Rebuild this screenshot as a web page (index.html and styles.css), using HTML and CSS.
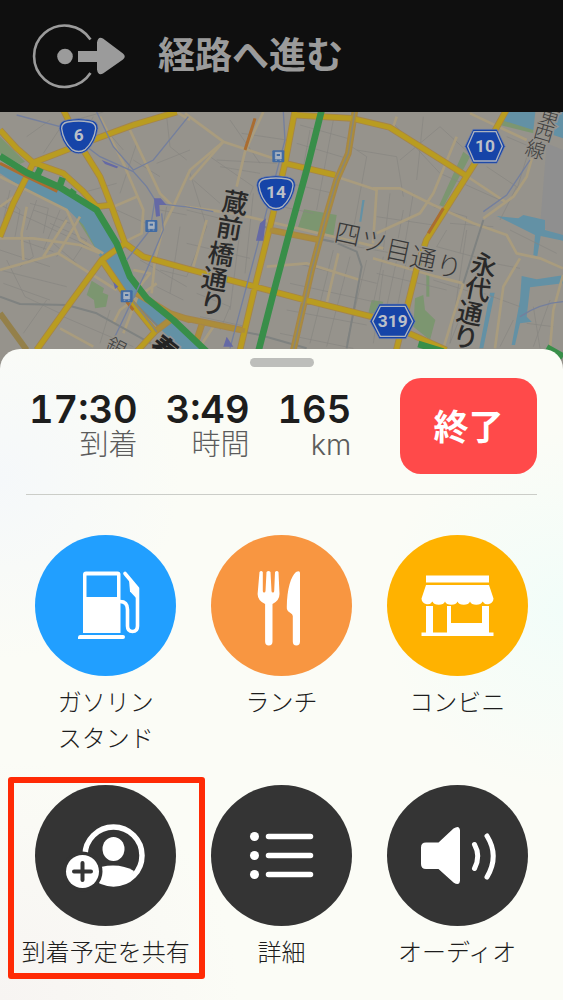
FILE: index.html
```html
<!DOCTYPE html>
<html lang="ja">
<head>
<meta charset="utf-8">
<meta name="viewport" content="width=device-width, initial-scale=1">
<title>経路案内</title>
<link rel="stylesheet" href="styles.css">
</head>
<body>
<div class="app">
  <header class="guidance">
    <svg class="guidance-icon" viewBox="0 0 96 68" aria-hidden="true">
      <path d="M58.500 17.500A30.700 30.700 0 1 0 58.500 51" fill="none" stroke="currentColor" stroke-width="2.600"/>
      <circle cx="33" cy="34.500" r="7.800"/>
      <path d="M46 29h19v-8.500q1-6.500 6-4l20 15q3.500 3 0 6L71 51.500q-5 2.500-6-4V40H46z"/>
    </svg>
    <h1 class="guidance-title">経路へ進む</h1>
  </header>

  <svg class="map" viewBox="0 6 1689 774" preserveAspectRatio="xMidYMin slice" role="img" aria-label="地図">
    <rect class="land" y="0" width="1689" height="790"/>
    <path class="block" d="M1640 100L1689 120V380L1620 350Z"/>
    <g class="park">
      <path d="M0 80L75 155L60 162L0 130Z"/>
      <path d="M222 312L240 318L315 425L300 438Z"/>
      <path d="M275 512L312 535L308 548L325 555L318 590L285 595L282 570L260 555Z"/>
      <path d="M912 298L1010 315L1000 378L892 358Z"/>
      <path d="M1115 570L1150 575L1140 610L1105 610Z"/>
      <path d="M1245 565L1270 555L1275 600L1306 630L1290 690L1240 650Z"/>
      <path d="M1390 125L1410 140L1330 290L1318 285Z"/>
      <path d="M1279 490H1288V560H1279Z"/>
      <path d="M1510 12L1600 40V70L1500 45Z"/>
    </g>
    <g class="water">
      <path d="M0 165L80 205L180 242L290 305L350 405L390 510L440 570L520 635L620 730H560L500 675L380 560L330 500L295 430L250 345L205 300L70 235L0 190Z"/>
      <path d="M1520 6H1606L1600 60L1510 32Z"/>
      <path d="M1670 6H1689V85L1660 75Z"/>
      <path d="M1490 318L1555 325L1570 315L1635 330L1635 360L1689 375V392L1622 378L1612 438L1600 436L1605 375Z"/>
      <path d="M1565 498L1610 508L1689 496V520L1590 532L1580 620L1595 635L1560 640L1545 705H1535L1560 570Z"/>
      <path d="M1470 548H1484L1450 715H1438Z"/>
      <path d="M1087 270H1094L1084 335H1078Z"/>
    </g>
    <g class="streets">
      <path d="M0 285L120 340L310 430M30 240L10 330M0 420L150 470M20 450L75 560L180 610M60 390L160 425M100 300L210 340M110 270L80 360M240 250L350 220M180 300L130 420M230 330L170 440M130 130L190 40L310 6M10 520L150 570M70 670L140 570M190 620L400 710M330 600L300 700M470 160L570 120M500 20L510 110L560 150M400 150L480 200M480 300L560 315M500 290L460 500M540 350L510 550M480 480L560 500M470 530L550 570M420 450L560 530M410 100L360 250M220 130L280 20M80 80L150 30"/>
      <path d="M570 190L620 350L560 500M630 140L760 230L710 350M660 170L780 190M700 320L670 540M720 360L690 600M760 250L735 490M590 550L690 590L660 660M600 620L740 650M650 150L830 160M725 70L860 90M690 30L780 160M560 300L680 330M560 400L750 445"/>
      <path d="M900 45L1060 90M890 100L1040 145M870 220L1000 250M845 290L940 310M930 60L880 340M1000 30L950 300M1040 100L1100 140L1060 360M960 390L1180 430M890 460L1130 520M870 520L1120 575M860 600L1100 645M840 670L1060 715M1000 420L930 700M1050 440L980 710M1100 450L1040 700M1150 480L1120 700"/>
      <path d="M1070 120L1190 140L1210 260M1180 40L1320 190L1500 270M1200 150L1320 50L1430 150M1130 320L1300 345M1170 250L1150 420M1210 300L1190 410M1240 250L1210 430M1270 20L1250 210M1350 340L1480 350M1340 360L1310 410L1440 445M1130 490L1340 540M1150 440L1120 580M1190 450L1160 590M1220 450L1190 600M1400 360L1350 700M1300 510L1410 545L1350 700M1460 170L1550 230L1500 330M1530 360L1670 430M1480 460L1560 475M1450 550L1560 590M1580 640L1660 650M1600 590L1620 715M1650 570L1600 710M1540 630L1500 710M1410 100L1490 160M1520 80L1590 110L1550 240"/>
      <path d="M20 265L60 300L45 380M90 280L145 295L130 370M200 320L160 400L230 460M85 380L100 440L60 470M150 340L260 390L220 450M0 480L200 530M350 300L460 350M310 50L370 120M580 210L660 280M1300 290L1400 320L1380 430"/>
    </g>
    <g class="lane">
      <path d="M0 200L80 240L200 300L240 390L310 430M70 240L0 290M80 290L65 370L70 450M0 385L100 385L240 405L300 430M0 480L175 430L240 320M130 440L200 330M175 430L350 540M300 20L370 160L430 300L425 370L375 395M385 50L480 250L520 290L490 350L465 450L455 550M530 6L570 30M520 290L570 180L670 95M340 290L410 260M340 640L360 600L470 520M180 655L280 710M400 480L450 490L410 540M370 670L420 540"/>
      <path d="M555 10L670 95L850 155M670 95L570 210M735 125L790 6M735 125L710 230M555 290L700 310L1150 415M580 470L620 330M800 470L920 460L1080 510M1015 430L980 580M1010 200L1130 240L1119 400M600 710L640 650"/>
      <path d="M1119 235L1200 235L1300 285L1420 340L1520 375L1550 430L1620 445L1689 475M1130 370L1260 310L1300 250L1370 80M1395 195L1515 275M1600 130L1580 200L1540 260L1450 325M1560 445L1510 530L1485 715M1119 445L1310 500L1390 520M1190 20L1180 50M1410 10L1580 90M1689 495L1660 600L1650 715M1390 520L1330 715"/>
    </g>
    <g class="gray-road">
      <path d="M0 560L60 582L200 585L290 610L470 710M410 585L480 655M555 630L780 675L920 715M790 350L1000 395L1070 425L1085 470L1040 715M1450 330L1390 520"/>
    </g>
    <path class="avenue" d="M0 610L80 720"/>
    <g class="main-case">
      <path d="M0 60L50 115L100 158L190 190L250 245L290 290L335 285M190 0L250 120L300 200L335 290L375 400L430 440L555 475L765 530L915 570L1115 620L1339 720M100 158L250 100L400 45L530 6M100 158L80 200L40 280L0 380M375 400L305 450L210 580L110 720M305 450L380 560L465 665L410 725M465 665L530 615M410 550L510 610L570 630M885 0L855 160L815 330L765 530L720 720M880 15L1055 25L1169 52L1269 115L1395 195M1519 0L1469 90L1399 200L1279 390L1249 480L1189 720M855 160L1005 195M1065 0L1045 130L1010 210L975 330L935 480L880 720M810 360L960 390M555 625L735 662M590 690L605 645"/>
    </g>
    <g class="main">
      <path d="M0 60L50 115L100 158L190 190L250 245L290 290L335 285M190 0L250 120L300 200L335 290L375 400L430 440L555 475L765 530L915 570L1115 620L1339 720M100 158L250 100L400 45L530 6M100 158L80 200L40 280L0 380M375 400L305 450L210 580L110 720M305 450L380 560L465 665L410 725M885 0L855 160L815 330L765 530L720 720M880 15L1055 25L1169 52L1269 115L1395 195M1519 0L1469 90L1399 200L1279 390L1249 480L1189 720M855 160L1005 195"/>
    </g>
    <path class="secondary" d="M465 665L530 615M410 550L510 610L570 630M1065 0L1045 130L1010 210L975 330L935 480L880 720M810 360L960 390M555 625L735 662M590 690L605 645"/>
    <path class="road-core" d="M1065 0L1045 130L1010 210L975 330L935 480L880 720M400 575L470 665"/>
    <path class="traffic" d="M0 160L80 200L172 244M735 120L765 25M1330 295L1285 370M380 575L400 600"/>
    <g class="express">
      <path d="M0 138L80 188L180 232L290 300L350 400L390 500L440 565L520 630L620 725M965 0L920 180L865 380L820 550L775 725M1255 702L1330 725M1640 712L1689 740M112 195L122 175M180 225L188 203M215 250L222 240"/>
    </g>
    <g class="rail">
      <path d="M50 15L180 50L300 140L400 185L440 230L465 270L450 360L380 450M290 6L340 110L400 180L460 150L565 20M470 280L570 292M485 310L490 360L440 480L340 690M850 6L855 90L790 340L690 715M1590 150L1520 255L1450 305M1560 620Q1620 580 1689 575M555 290L640 305"/>
    </g>
    <path class="station-area" d="M462 265L482 265L500 285L478 285L480 318L468 320ZM780 340L798 325L790 392H768ZM340 515L355 530L345 537ZM305 150L355 170L350 175L315 162ZM680 680L700 710H670Z"/>
    <g class="station">
      <g transform="translate(436 330)"><rect width="36" height="36" rx="3"/><path d="M9 6h18v20H9zM9 30h5m8 0h5"/><path class="station-window" d="M13 11h10v6H13z"/></g>
      <g transform="translate(362 541)"><rect width="36" height="36" rx="3"/><path d="M9 6h18v20H9zM9 30h5m8 0h5"/><path class="station-window" d="M13 11h10v6H13z"/></g>
      <g transform="translate(817 121)"><rect width="36" height="36" rx="3"/><path d="M9 6h18v20H9zM9 30h5m8 0h5"/><path class="station-window" d="M13 11h10v6H13z"/></g>
    </g>
    <g class="shield">
      <g transform="translate(236 79)"><path class="shield-edge" d="M-35-49Q0-56 35-49Q58-46 58-24Q52 18 24 44Q0 60-24 44Q-52 18-58-24Q-58-46-35-49Z"/><path class="shield-line" d="M-33-43Q0-49 33-43Q51-40 51-23Q46 15 20 39Q0 52-20 39Q-46 15-51-23Q-51-40-33-43Z"/><text y="14">6</text></g>
      <g transform="translate(828 250)"><path class="shield-edge" d="M-35-49Q0-56 35-49Q58-46 58-24Q52 18 24 44Q0 60-24 44Q-52 18-58-24Q-58-46-35-49Z"/><path class="shield-line" d="M-33-43Q0-49 33-43Q51-40 51-23Q46 15 20 39Q0 52-20 39Q-46 15-51-23Q-51-40-33-43Z"/><text y="14">14</text></g>
      <g transform="translate(1455 109)"><path class="shield-edge" d="M-36-51H36L60 0L36 51H-36L-60 0Z"/><path class="shield-line" d="M-33-44H33L52 0L33 44H-33L-52 0Z"/><text y="18">10</text></g>
      <g transform="translate(1178 634)"><path class="shield-edge" d="M-40-52H40L68 0L40 52H-40L-68 0Z"/><path class="shield-line" d="M-37-45H37L60 0L37 45H-37L-60 0Z"/><text y="18">319</text></g>
    </g>
    <g class="road-name">
      <text class="road-strong" x="701 684 659 640 634" y="299 375 454 529 602" rotate="10">蔵前橋通り</text>
      <text class="road-strong" x="1447 1429 1405 1392" y="485 557 629 702" rotate="12">永代通り</text>
      <text class="road-light" x="1038 1116 1190 1265 1342" y="392 415 442 466 489" rotate="12">四ツ目通り</text>
      <text class="road-line" x="1645 1627 1602" y="33 80 132" rotate="16">東西線</text>
      <text class="road-line" x="341" y="718" rotate="28">銀</text>
      <text class="road-bold" x="484" y="716" rotate="38">春</text>
    </g>
  </svg>

  <main class="sheet">
    <div class="grabber"></div>
    <section class="summary" aria-label="到着予定">
      <dl class="stats">
        <div class="stat"><dd>17:30</dd><dt>到着</dt></div>
        <div class="stat"><dd>3:49</dd><dt>時間</dt></div>
        <div class="stat"><dd>165</dd><dt>km</dt></div>
      </dl>
      <button class="end" type="button">終了</button>
    </section>

    <div class="actions">
      <button class="action" type="button">
        <svg class="disc blue" viewBox="0 0 141 141" aria-hidden="true">
          <path d="M48 39.500a3 3 0 0 1 3-3h31.500a3 3 0 0 1 3 3V98H48z"/>
          <path class="hole" d="M51.500 40.500h30.500v21.500H51.500z"/>
          <path d="M45 100h43q2 0 2 2t-2 2H43v-1.500q0-2.500 2-2.500z"/>
          <path class="outline" d="M85 66.500q7.500 0 7.500 8V91q0 5.500 5 5.500t5-5.500V53.500L90 38.500" stroke-width="3.600" stroke-linecap="round" stroke-linejoin="round"/>
          <path d="M94 45l9.500 8v12.500l-8.500-9z"/>
        </svg>
        <span>ガソリン<br>スタンド</span>
      </button>
      <button class="action" type="button">
        <svg class="disc orange" viewBox="0 0 141 141" aria-hidden="true">
          <path d="M48.500 37q1.700-2 3.300 0v19q0 1.500 1.300 1.500t1.400-1.500L55.500 37q2-2 4 0l1 19q0 1.500 1.400 1.500t1.300-1.500L64 37q2-2 3.500 0l1 22q0 6.500-7 10v37.500q0 4-3.700 4t-3.700-4V69q-7.500-3.500-7.500-10z"/>
          <path d="M89 38v68.500q0 4-3.600 4t-3.600-4V81q0-2-3-3.500-3.300-2-3-5.500C76 54 80 41 85 37q4-2 4 1z"/>
        </svg>
        <span>ランチ</span>
      </button>
      <button class="action" type="button">
        <svg class="disc amber" viewBox="0 0 141 141" aria-hidden="true">
          <path d="M39 40.500h63v7H39zM39 50h63l4.500 13.500a6 6 0 0 1-11 3 6.500 4.500 0 0 1-12.500 0 6.500 4.500 0 0 1-12.500 0 6.500 4.500 0 0 1-12.500 0 6.500 4.500 0 0 1-12.500 0 6 6 0 0 1-11-3z"/>
          <path d="M39 71h7v26.500h14V71h4v17h31V71h7v26.500h4.500v3.500h-72v-3.500H39z"/>
        </svg>
        <span>コンビニ</span>
      </button>
      <button class="action highlighted" type="button">
        <svg class="disc dark" viewBox="0 0 141 141" aria-hidden="true">
          <circle class="outline" cx="78.500" cy="70.500" r="28.500" stroke-width="5.500"/>
          <ellipse cx="78.500" cy="64" rx="11" ry="12"/>
          <path d="M58 85q8-4.500 20-4.500 12 0 21 5.500-8 14-21 14-10 0-20-7z"/>
          <circle class="hole" cx="47.500" cy="86.500" r="20"/>
          <circle cx="47.500" cy="86.500" r="16.500"/>
          <path class="plus" d="M39 86.500h17M47.500 78v17"/>
        </svg>
        <span>到着予定を共有</span>
      </button>
      <button class="action" type="button">
        <svg class="disc dark" viewBox="0 0 141 141" aria-hidden="true">
          <path class="outline" d="M57.500 51.500h42M57.500 70.500h42M57.500 89.500h42" stroke-width="5.500" stroke-linecap="round"/>
          <circle cx="43.500" cy="51.500" r="4.500"/><circle cx="43.500" cy="70.500" r="4.500"/><circle cx="43.500" cy="89.500" r="4.500"/>
        </svg>
        <span>詳細</span>
      </button>
      <button class="action" type="button">
        <svg class="disc dark" viewBox="0 0 141 141" aria-hidden="true">
          <path d="M39 57.500h12.500L66.500 43.500q6-4 6.500 2v50q-.5 6-6.500 2L51.500 84H39q-5 0-5-5V62.500q0-5 5-5z"/>
          <path class="outline" d="M87.500 59.500q6.500 11.500 0 24M100 51q12.500 20 0 41" stroke-width="5" stroke-linecap="round"/>
        </svg>
        <span>オーディオ</span>
      </button>
    </div>
  </main>
</div>
</body>
</html>
```
FILE: styles.css
```css
* {
  box-sizing: border-box;
}

body {
  margin: 0;
  font-family: Inter, "Noto Sans CJK JP", sans-serif;
  color: #1d1d1d;
  background: #fbfcf6;
}

button {
  padding: 0;
  border: 0;
  font: inherit;
  color: inherit;
  background: none;
}

.app {
  display: flex;
  flex-direction: column;
  min-height: 100vh;
}

/* Guidance banner */
.guidance {
  display: flex;
  align-items: center;
  gap: 30px;
  padding: 22px 32px;
  color: #9b9b9b;
  background: #0f0f0f;
}

.guidance-icon {
  width: 96px;
  height: 68px;
  fill: currentColor;
}

.guidance-title {
  margin: 0;
  font-size: 37px;
  line-height: 48px;
  font-weight: 700;
}

/* Map */
.map {
  display: block;
  width: 100%;
  height: 258px;
}

.map path {
  fill: none;
}

.map .land { fill: #96938c; }
.map .block { fill: #8f8f8f; }
.map .park path { fill: #7c9670; }
.map .water path { fill: #6391a5; }
.streets path { stroke: #878581; stroke-width: 2; }
.lane path { stroke: #a99c7e; stroke-width: 8; stroke-linejoin: round; }
.gray-road path { stroke: #7f8280; stroke-width: 6; stroke-linejoin: round; }
.map .avenue { stroke: #94804a; stroke-width: 18; }
.main-case path { stroke: #a5854a; stroke-width: 20; stroke-linejoin: round; }
.main path { stroke: #b99c20; stroke-width: 15; stroke-linejoin: round; }
.map .secondary { stroke: #ac8d3a; stroke-width: 14; }
.map .road-core { stroke: #8b8674; stroke-width: 5; }
.map .traffic { stroke: #aa6d31; stroke-width: 9; }
.express path { stroke: #388e49; stroke-width: 20; stroke-linejoin: round; }
.rail path { stroke: #747f9d; stroke-width: 4; }
.map .station-area { fill: #6569a5; }

.station rect { fill: #416ba3; }
.station path { fill: #a7b2bf; stroke: #a7b2bf; stroke-width: 2; }
.station .station-window { fill: #416ba3; stroke: none; }

.shield .shield-edge { fill: #1644a8; stroke: #7985a9; stroke-width: 2; }
.shield .shield-line { stroke: #adb3be; stroke-width: 4; }

.shield text {
  font-family: Roboto, sans-serif;
  font-size: 52px;
  font-weight: 700;
  text-anchor: middle;
  fill: #bcc0c8;
}

.road-name text {
  font-family: "Noto Sans CJK JP", sans-serif;
  text-anchor: middle;
  paint-order: stroke;
  stroke: #96938c;
  stroke-width: 8;
}

.road-name .road-strong { font-size: 78px; font-weight: 500; fill: #292929; }
.road-name .road-light { font-size: 78px; font-weight: 300; fill: #383838; }
.road-name .road-line { font-size: 60px; font-weight: 300; fill: #404040; }
.road-name .road-bold { font-size: 78px; font-weight: 900; fill: #242424; }

/* Bottom sheet */
.sheet {
  position: relative;
  flex: 1;
  margin-top: -21px;
  padding: 9px 18px 20px;
  border-radius: 20px 20px 0 0;
  background:
    radial-gradient(circle at 0 20%, #f5f8fa, transparent 180px),
    radial-gradient(circle at 100% 40%, #f2fdf9, transparent 180px),
    radial-gradient(circle at 0 100%, #f7f4f2, transparent 240px),
    #fbfcf6;
}

.grabber {
  width: 64px;
  height: 9px;
  margin: 0 auto 11px;
  border-radius: 5px;
  background: #bdbebb;
}

.summary {
  display: flex;
  justify-content: space-between;
  align-items: flex-start;
  margin: 0 8px;
  padding-bottom: 20px;
  border-bottom: 1px solid #cbcdc8;
}

.stats {
  display: flex;
  gap: 28px;
  margin: 0;
  padding: 12px 0 0 3px;
}

.stat {
  display: flex;
  flex-direction: column;
  text-align: right;
}

.stat dd {
  margin: 0;
  font-size: 38px;
  line-height: 39px;
  font-weight: 600;
  font-variant-numeric: tabular-nums;
}

.stat dt {
  font-size: 29px;
  line-height: 32px;
  font-weight: 300;
  color: #5c5c5c;
}

.end {
  width: 137px;
  height: 96px;
  border-radius: 21px;
  padding-bottom: 4px;
  font-size: 35px;
  font-weight: 700;
  color: #ffffff;
  background: #ff4a4a;
}

/* Action grid */
.actions {
  display: grid;
  grid-template-columns: repeat(3, 1fr);
  row-gap: 28px;
  padding-top: 40px;
}

.action {
  position: relative;
  display: flex;
  flex-direction: column;
  align-items: center;
  gap: 9px;
  font-size: 24px;
  line-height: 36px;
  font-weight: 300;
  white-space: nowrap;
}

.highlighted::after {
  content: "";
  position: absolute;
  inset: -8px -11px -8px -10px;
  border: 6px solid #ff2a05;
  border-radius: 3px;
}

.disc {
  width: 141px;
  height: 141px;
  border-radius: 50%;
  fill: #ffffff;
  background: var(--disc);
}

.blue { --disc: #219fff; }
.orange { --disc: #f89641; }
.amber { --disc: #ffb200; }
.dark { --disc: #343434; }

.disc .hole { fill: var(--disc); }
.disc .outline { fill: none; stroke: #ffffff; }

.disc .plus {
  stroke: var(--disc);
  stroke-width: 4;
  stroke-linecap: round;
}
```
